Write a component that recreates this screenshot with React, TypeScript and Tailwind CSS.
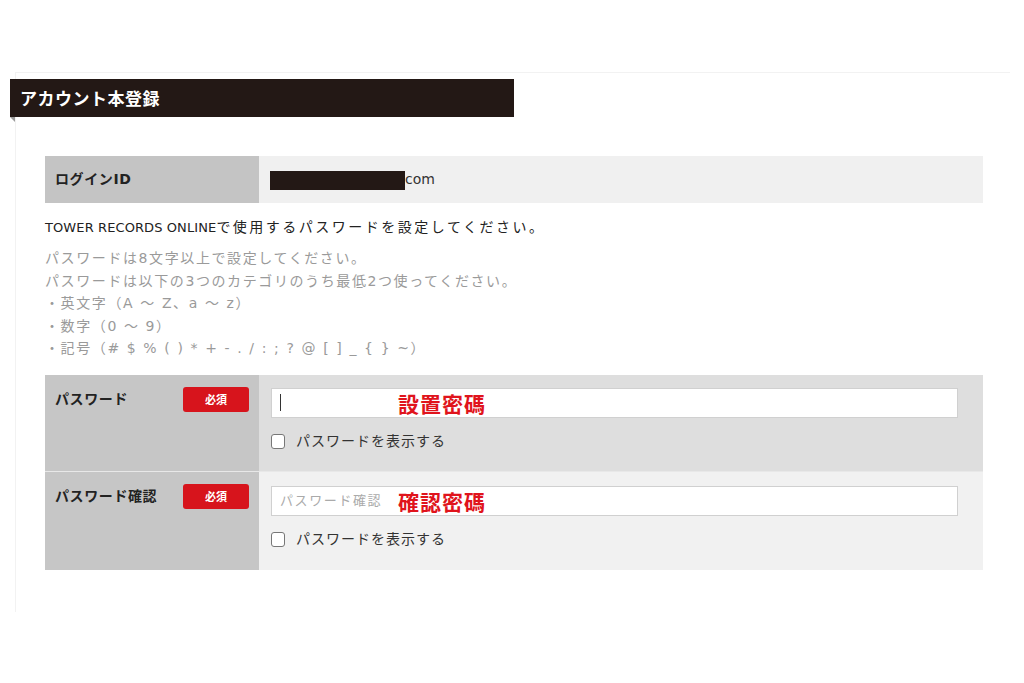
import React from "react";

const font = { fontFamily: '"DejaVu Sans", "Noto Sans CJK JP", sans-serif' };
const jp = { fontFamily: '"Noto Sans CJK JP", "Noto Sans", sans-serif' };

function Badge() {
  return (
    <span
      className="flex h-[25px] w-[66px] items-center justify-center rounded-[3px] bg-[#d7141c] text-[11px] font-bold text-white"
      style={jp}
    >
      必須
    </span>
  );
}

function ShowPassword() {
  return (
    <label className="mt-[13px] flex items-center gap-[11px] text-[14px] tracking-[1px] text-[#333]">
      <span className="h-[15px] w-[14px] rounded-[3px] border border-[#777] bg-white" />
      パスワードを表示する
    </label>
  );
}

interface PasswordRowProps {
  label: string;
  placeholder?: string;
  note: string;
  rightBg: string;
  height: string;
  top: string;
  caret?: boolean;
}

function PasswordRow({ label, placeholder, note, rightBg, height, top, caret }: PasswordRowProps) {
  return (
    <div className={`grid grid-cols-[214px_724px] ${height}`}>
      <div className="flex items-start justify-between bg-[#c6c6c6] pl-[10px] pr-[10px] pt-[12px]">
        <span className="pt-[2px] text-[14px] font-bold tracking-[0.6px] text-[#222]">{label}</span>
        <Badge />
      </div>
      <div className={`${rightBg} pl-[12px] ${top}`}>
        <div className="relative flex h-[30px] w-[687px] items-center border border-[#d0d0d0] bg-white pl-[8px]">
          {caret && <span className="h-[17px] w-px bg-[#333]" />}
          {placeholder && <span className="text-[13px] tracking-[1.6px] text-[#aaa]">{placeholder}</span>}
          <span
            className="absolute left-[126px] top-[1px] text-[21px] font-bold leading-[26px] tracking-[1px] text-[#e0141c]"
            style={jp}
          >
            {note}
          </span>
        </div>
        <ShowPassword />
      </div>
    </div>
  );
}

export default function App() {
  return (
    <div className="min-h-[683px] w-[1024px] bg-white pt-[72px]" style={font}>
      <div className="ml-[15px] h-[540px] w-[995px] border-l border-t border-[#f2f2f2]">
        {/* 見出し */}
        <div className="relative -ml-[6px] mt-[6px] flex h-[38px] w-[504px] items-center bg-[#231815] pl-[10px]">
          <h1 className="text-[17px] font-bold tracking-[0.5px] text-white" style={jp}>
            アカウント本登録
          </h1>
          <span className="absolute -bottom-[5px] left-0 h-0 w-0 border-l-[5px] border-t-[5px] border-l-transparent border-t-[#9a9a9a]" />
        </div>

        <div className="pl-[29px] pt-[39px]">
          {/* ログインID */}
          <div className="grid h-[47px] grid-cols-[214px_724px]">
            <div className="flex items-center bg-[#c4c4c4] pl-[10px] text-[14px] font-bold tracking-[0.6px] text-[#222]">
              ログインID
            </div>
            <div className="flex items-center bg-[#f0f0f0] pl-[11px] text-[14px] text-[#333]">
              <span className="mt-[1px] h-[19px] w-[135px] bg-[#231815]" />
              <span>com</span>
            </div>
          </div>

          <p className="mt-[13px] text-[14px] leading-[22px] tracking-[2.5px] text-[#222]">
            <span className="text-[13px] tracking-[0.1px]">TOWER RECORDS ONLINE</span>
            で使用するパスワードを設定してください。
          </p>
          <div className="mt-[8px] text-[14px] leading-[22.5px] tracking-[1.6px] text-[#9a9a9a]">
            <p>パスワードは8文字以上で設定してください。</p>
            <p>パスワードは以下の3つのカテゴリのうち最低2つ使ってください。</p>
            <p>・英文字（A ～ Z、a ～ z）</p>
            <p>・数字（0 ～ 9）</p>
            <p>・記号（# $ % ( ) * + - . / : ; ? @ [ ] _ {"{"} {"}"} ~）</p>
          </div>

          {/* パスワード入力 */}
          <div className="mt-[15px] flex w-[938px] flex-col gap-px bg-[#e8e8e8]">
            <PasswordRow
              label="パスワード"
              note="設置密碼"
              rightBg="bg-[#dedede]"
              height="h-[96px]"
              top="pt-[13px]"
              caret
            />
            <PasswordRow
              label="パスワード確認"
              placeholder="パスワード確認"
              note="確認密碼"
              rightBg="bg-[#f1f1f1]"
              height="h-[98px]"
              top="pt-[14px]"
            />
          </div>
        </div>
      </div>
    </div>
  );
}
